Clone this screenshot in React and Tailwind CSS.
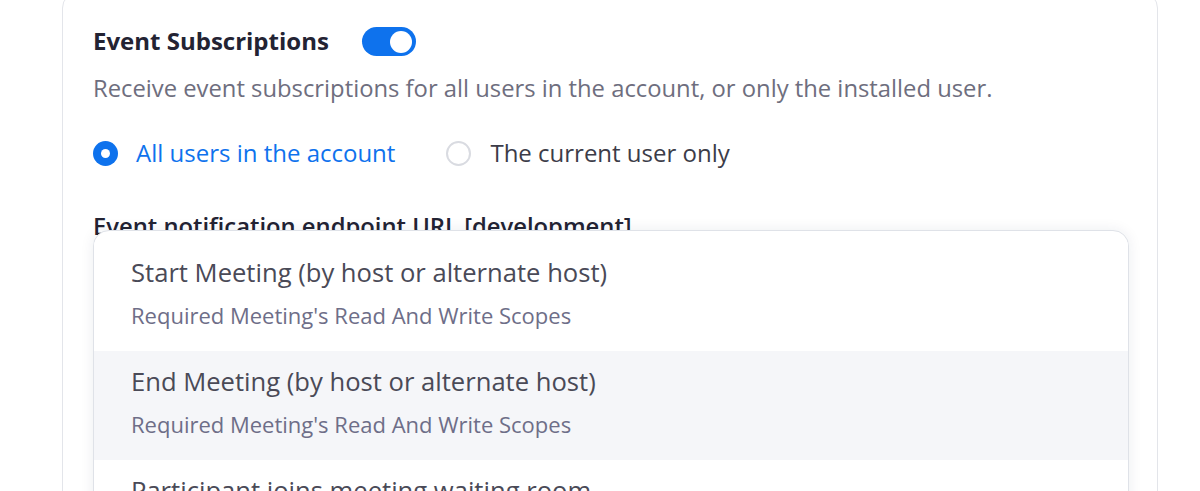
export default function App() {
  const font = { fontFamily: '"Open Sans", "Noto Sans", sans-serif' }
  const events = [
    { title: 'Start Meeting (by host or alternate host)', sub: "Required Meeting's Read And Write Scopes" },
    { title: 'End Meeting (by host or alternate host)', sub: "Required Meeting's Read And Write Scopes", active: true },
    { title: 'Participant joins meeting waiting room', sub: "Required Meeting's Read And Write Scopes" },
  ]

  return (
    <div className="h-[491px] w-[1200px] overflow-hidden bg-white" style={font}>
      <div className="relative ml-[62px] mr-[42px] mt-[-8px] h-[560px] rounded-2xl border border-[#e3e5ea] bg-white px-[30px] pt-[34px]">
        <div className="flex h-[29px] items-center">
          <h2 className="-mt-[2px] text-[24px] font-bold leading-[32px] text-[#232333]">Event Subscriptions</h2>
          {/* toggle, on */}
          <div className="ml-[33px] flex h-[29px] w-[54px] items-center justify-end rounded-full bg-[#0e72ed] pr-[4px]">
            <div className="h-[22px] w-[22px] rounded-full bg-white" />
          </div>
        </div>

        <p className="mt-[16px] text-[23.8px] leading-[32px] text-[#6e6e7e]">
          Receive event subscriptions for all users in the account, or only the installed user.
        </p>

        <div className="mt-[33px] flex h-[32px] items-center text-[24px] leading-[32px]">
          <label className="flex items-center">
            <span className="flex h-[25px] w-[25px] items-center justify-center rounded-full bg-[#0e72ed]">
              <span className="h-[9px] w-[9px] rounded-full bg-white" />
            </span>
            <span className="ml-[18px] text-[#0e72ed]">All users in the account</span>
          </label>
          <label className="ml-[51px] flex items-center">
            <span className="h-[25px] w-[25px] rounded-full border-2 border-[#d9dbe1] bg-white" />
            <span className="ml-[19px] text-[#3c3c48]">The current user only</span>
          </label>
        </div>

        <h3 className="mt-[41px] text-[23.8px] font-semibold leading-[32px] text-[#232333]">
          Event notification endpoint URL [development]
        </h3>

        {/* open event type dropdown */}
        <div className="absolute left-[30px] top-[237px] w-[1036px] overflow-hidden rounded-2xl border border-[#dfe2e8] bg-white pt-[11px] shadow-[0_0_14px_rgba(30,40,80,0.08)]">
          {events.map((ev) => (
            <div
              key={ev.title}
              className={`h-[109px] px-[37px] pt-[15px] ${ev.active ? 'bg-[#f5f6f9]' : 'bg-white'}`}
            >
              <div className="text-[25.6px] leading-[32px] text-[#4a4a57]">{ev.title}</div>
              <div className="mt-[12px] text-[22px] leading-[28px] text-[#6e6e88]">{ev.sub}</div>
            </div>
          ))}
        </div>
      </div>
    </div>
  )
}
